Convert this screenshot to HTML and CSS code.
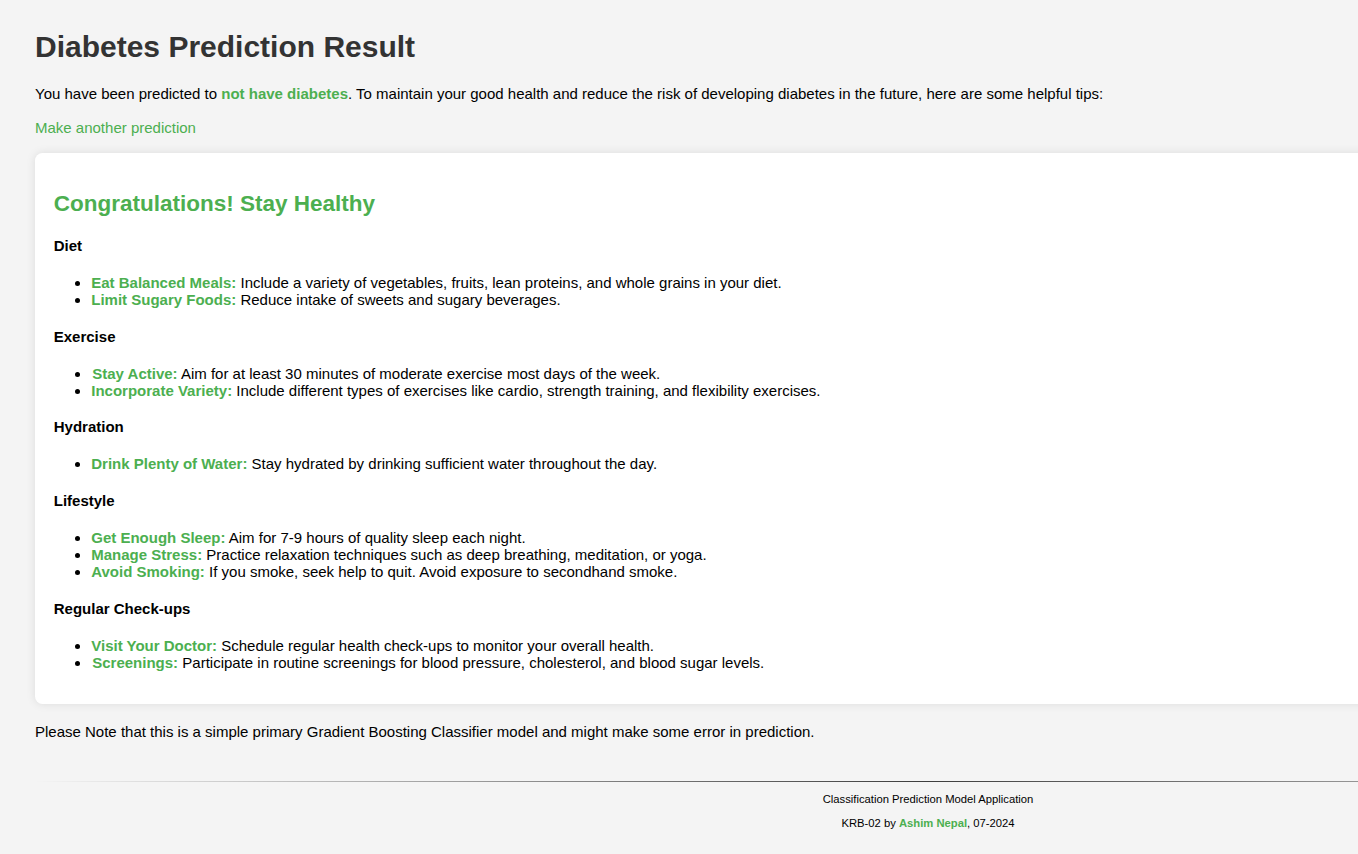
FILE: index.html
```html
<!DOCTYPE html>
<html lang="en">
<head>
<meta charset="utf-8">
<title>Diabetes Prediction Result</title>
<link rel="stylesheet" href="styles.css">
</head>
<body>
<div class="page">
  <h1 class="title">Diabetes Prediction Result</h1>
  <p class="intro">You have been predicted to <strong class="hl">not have diabetes</strong>. To maintain your good health and reduce the risk of developing diabetes in the future, here are some helpful tips:</p>
  <a class="again" href="#">Make another prediction</a>
  <div class="card">
    <h2 class="card-title">Congratulations! Stay Healthy</h2>

    <h4 class="sec">Diet</h4>
    <ul class="tips">
      <li><strong class="hl">Eat Balanced Meals:</strong> Include a variety of vegetables, fruits, lean proteins, and whole grains in your diet.</li>
      <li><strong class="hl">Limit Sugary Foods:</strong> Reduce intake of sweets and sugary beverages.</li>
    </ul>

    <h4 class="sec">Exercise</h4>
    <ul class="tips">
      <li><strong class="hl nudge">Stay Active:</strong> Aim for at least 30 minutes of moderate exercise most days of the week.</li>
      <li><strong class="hl">Incorporate Variety:</strong> Include different types of exercises like cardio, strength training, and flexibility exercises.</li>
    </ul>

    <h4 class="sec">Hydration</h4>
    <ul class="tips">
      <li><strong class="hl">Drink Plenty of Water:</strong> Stay hydrated by drinking sufficient water throughout the day.</li>
    </ul>

    <h4 class="sec">Lifestyle</h4>
    <ul class="tips">
      <li><strong class="hl">Get Enough Sleep:</strong> Aim for 7-9 hours of quality sleep each night.</li>
      <li><strong class="hl">Manage Stress:</strong> Practice relaxation techniques such as deep breathing, meditation, or yoga.</li>
      <li><strong class="hl">Avoid Smoking:</strong> If you smoke, seek help to quit. Avoid exposure to secondhand smoke.</li>
    </ul>

    <h4 class="sec">Regular Check-ups</h4>
    <ul class="tips">
      <li><strong class="hl">Visit Your Doctor:</strong> Schedule regular health check-ups to monitor your overall health.</li>
      <li><strong class="hl nudge">Screenings:</strong> Participate in routine screenings for blood pressure, cholesterol, and blood sugar levels.</li>
    </ul>
  </div>
  <p class="note">Please Note that this is a simple primary Gradient Boosting Classifier model and might make some error in prediction.</p>
  <footer class="footer">
    <div class="rule"></div>
    <p class="foot-line">Classification Prediction Model Application</p>
    <p class="foot-line">KRB-02 by <strong class="hl">Ashim Nepal</strong>, 07-2024</p>
  </footer>
</div>
</body>
</html>
```
FILE: styles.css
```css
html {
  overflow-x: hidden;
}

body {
  margin: 0;
  background: #f4f4f4;
  color: #000;
  font-family: "Liberation Sans", Arial, sans-serif;
  font-size: 15px;
  line-height: 17px;
}

.page {
  width: 1786px;
  padding-left: 35px;
}

.title {
  margin: 30.4px 0 0;
  font-size: 30px;
  line-height: 34.5px;
  font-weight: bold;
  color: #333;
}

.intro {
  margin: 20.5px 0 0;
}

.hl {
  color: #4caf50;
  font-weight: bold;
}

.nudge {
  margin-left: 1px;
}

.again {
  display: block;
  margin-top: 17px;
  color: #4caf50;
  text-decoration: none;
}

.card {
  margin: 16.4px 0 18.6px;
  padding: 18.75px 18.75px 18.5px;
  background: #fff;
  border-radius: 7.5px;
  box-shadow: 0 0 10px rgba(0, 0, 0, 0.1);
}

.card-title {
  margin: 19px 0 20.4px;
  font-size: 22.5px;
  line-height: 26px;
  color: #4caf50;
}

.sec {
  margin: 19.9px 0;
  font-size: 15px;
  line-height: 17px;
}

.card-title + .sec {
  margin-top: 0;
}

.tips {
  margin: 15px 0;
  padding-left: 37.5px;
}

.note {
  margin: 0;
}

.footer {
  margin-top: 40.5px;
  text-align: center;
}

.rule {
  height: 1px;
  background-image: linear-gradient(to right, rgba(0, 0, 0, 0), rgba(0, 0, 0, 0.75), rgba(0, 0, 0, 0));
}

.foot-line {
  margin: 11.1px 0;
  font-size: 11.25px;
  line-height: 12.9px;
}
```
